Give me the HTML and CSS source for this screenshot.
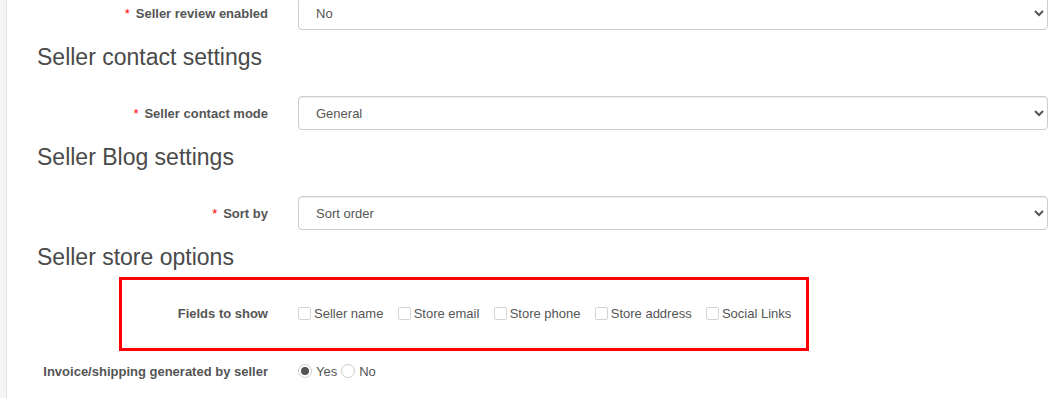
FILE: index.html
```html
<!DOCTYPE html>
<html lang="en">
<head>
    <meta charset="UTF-8">
    <meta name="viewport" content="width=device-width, initial-scale=1.0">
    <title>Seller settings</title>
    <link rel="stylesheet" href="styles.css">
</head>
<body>
    <div class="page">
        <div class="edge"></div>

        <main class="content">
            <div class="form-group">
                <label class="control-label required">Seller review enabled</label>
                <select class="form-control">
                    <option>No</option>
                    <option>Yes</option>
                </select>
            </div>

            <h3>Seller contact settings</h3>

            <div class="form-group">
                <label class="control-label required">Seller contact mode</label>
                <select class="form-control">
                    <option>General</option>
                </select>
            </div>

            <h3>Seller Blog settings</h3>

            <div class="form-group">
                <label class="control-label required">Sort by</label>
                <select class="form-control">
                    <option>Sort order</option>
                </select>
            </div>

            <h3>Seller store options</h3>

            <div class="form-group fields">
                <span class="highlight"></span>
                <label class="control-label">Fields to show</label>
                <div class="choices">
                    <label class="choice"><input type="checkbox">Seller name</label>
                    <label class="choice"><input type="checkbox">Store email</label>
                    <label class="choice"><input type="checkbox">Store phone</label>
                    <label class="choice"><input type="checkbox">Store address</label>
                    <label class="choice"><input type="checkbox">Social Links</label>
                </div>
            </div>

            <div class="form-group">
                <label class="control-label">Invoice/shipping generated by seller</label>
                <div class="choices radios">
                    <label class="choice"><input type="radio" name="invoice" checked>Yes</label>
                    <label class="choice"><input type="radio" name="invoice">No</label>
                </div>
            </div>
        </main>
    </div>
</body>
</html>
```

FILE: styles.css
```css
* {
    box-sizing: border-box;
}
body {
    margin: 0;
    font-family: "Liberation Sans", Arial, sans-serif;
    font-size: 13px;
    color: #555;
    background: #fff;
    overflow: hidden;
}
.page {
    display: flex;
    min-height: 100vh;
}
.edge {
    flex: 0 0 7px;
    background: #f4f4f4;
    border-right: 1px solid #e2e2e2;
}
.content {
    flex: 1;
    margin-top: -4px;
    padding: 0 9px 0 30px;
}

.form-group {
    display: flex;
    align-items: center;
    gap: 30px;
    height: 34px;
    margin-bottom: 14px;
}
.control-label {
    flex: 0 0 231px;
    text-align: right;
    font-weight: bold;
    color: #555;
}
.required::before {
    content: "*";
    margin-right: 6px;
    color: #f00;
    font-weight: normal;
}
.form-control {
    flex: 1;
    height: 34px;
    padding: 6px 13px;
    font-family: inherit;
    font-size: 13px;
    color: #555;
    background: #fff;
    border: 1px solid #ccc;
    border-radius: 4px;
    box-shadow: inset 0 1px 1px rgba(0, 0, 0, .075);
}

h3 {
    margin: 0 0 26px;
    font-size: 23px;
    font-weight: normal;
    line-height: 26px;
    color: #4a4a4a;
}

.choices {
    display: flex;
    align-items: center;
    gap: 14.25px;
}
.choice {
    display: flex;
    align-items: center;
    gap: 3px;
    color: #555;
}
.choice input {
    appearance: none;
    margin: 0;
    width: 13px;
    height: 13px;
    border: 1px solid #d4d4d4;
    border-radius: 2px;
    background: #fff;
}
.radios {
    gap: 4px;
}
.radios .choice {
    gap: 4px;
}
.radios .choice input {
    width: 14px;
    height: 14px;
    border-radius: 50%;
    border-color: #cfcfcf;
    display: grid;
    place-content: center;
}
.radios .choice input:checked::before {
    content: "";
    width: 8px;
    height: 8px;
    border-radius: 50%;
    background: #555;
}

.fields {
    position: relative;
    margin-bottom: 24px;
}
.fields .choices {
    margin-top: 1px;
}
.highlight {
    position: absolute;
    left: 82px;
    top: -19px;
    width: 690px;
    height: 74px;
    border: 3px solid #f00;
}
```
